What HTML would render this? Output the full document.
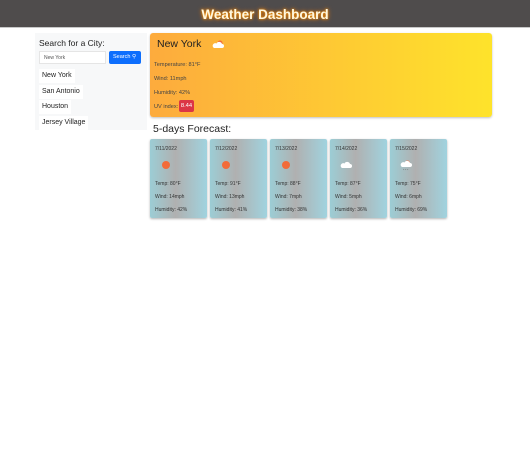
<!DOCTYPE html>
<html><head><style>
*{margin:0;padding:0;box-sizing:border-box}
body{width:530px;height:450px;background:#fff;font-family:"Liberation Sans","DejaVu Sans",sans-serif;color:#212529;position:relative;overflow:hidden}
.hdr{position:absolute;left:0;top:0;width:530px;height:28px;background:#4f4c4c;border-bottom:1px solid #c8c8c8}
.hdr h1{position:absolute;left:0;right:0;top:7px;text-align:center;font-size:13.5px;font-weight:bold;color:#fff8e0;text-shadow:0 0 2px #ff9a00,0 0 5px #ff7a00}
.side{position:absolute;left:35px;top:33px;width:112px;height:97px;background:#f7f8f9}
.side .t{position:absolute;left:4px;top:5px;font-size:8.5px;color:#222}
.inp{position:absolute;left:4px;top:18px;width:67px;height:13px;background:#fff;border:1px solid #e5e5e5;font-size:5px;color:#555;padding:3px 4px}
.btn{position:absolute;left:74px;top:18px;width:32px;height:13px;background:#0d6efd;border-radius:2px;color:#fff;font-size:5.5px;padding:3px 4px}
.city{position:absolute;left:4px;background:#fff;font-size:7px;color:#222;padding:3px 3px;height:14px}
.main{position:absolute;left:150px;top:33px;width:342px;height:84px;background:linear-gradient(90deg,#fdab3d,#fee32b);border-radius:3px;box-shadow:0 1px 2px rgba(0,0,0,.25)}
.main .n{position:absolute;left:7px;top:5px;font-size:10.5px;color:#222}
.main .l{position:absolute;left:4px;font-size:5.6px;color:#444}
.uv{position:absolute;left:29px;top:67px;width:15px;height:12px;background:#dc3545;border-radius:2px;color:#fff;font-size:5.8px;text-align:center;line-height:12px}
.fh{position:absolute;left:153px;top:123px;font-size:10.5px;color:#222}
.card{position:absolute;top:139px;width:57px;height:79px;border-radius:2px;background:linear-gradient(90deg,#9ccdd5,#b0b0b0 45%,#a0d3df);box-shadow:0 1px 2px rgba(0,0,0,.3);font-size:5px;color:#333}
.card div{position:absolute;left:5px}
.sun{width:8px;height:8px;border-radius:50%;background:#f26b3a;left:12px!important;top:22px}
</style></head><body>
<div class="hdr"><h1>Weather Dashboard</h1></div>
<div class="side">
<div class="t">Search for a City:</div>
<div class="inp">New York</div>
<div class="btn">Search &#9906;</div>
<div class="city" style="top:36px">New York</div>
<div class="city" style="top:52px">San Antonio</div>
<div class="city" style="top:67px">Houston</div>
<div class="city" style="top:83px">Jersey Village</div>
</div>
<div class="main">
<div class="n">New York</div>
<svg style="position:absolute;left:62px;top:7px" width="12" height="9" viewBox="0 0 12 9"><circle cx="8" cy="3" r="2.5" fill="#f26b3a"/><path d="M2 8h8a2 2 0 0 0 0-4a3 3 0 0 0-5.5-.5A2.2 2.2 0 0 0 2 8z" fill="#fff"/></svg>
<div class="l" style="top:29px">Temperature: 81°F</div>
<div class="l" style="top:43px">Wind: 11mph</div>
<div class="l" style="top:57px">Humidity: 42%</div>
<div class="l" style="top:71px">UV index:</div>
<div class="uv">8.44</div>
</div>
<div class="fh">5-days Forecast:</div>
<div class="card" style="left:150px"><div style="top:7px">7/11/2022</div><div class="sun"></div><div style="top:42px">Temp: 80°F</div><div style="top:55px">Wind: 14mph</div><div style="top:68px">Humidity: 42%</div></div>
<div class="card" style="left:210px"><div style="top:7px">7/12/2022</div><div class="sun"></div><div style="top:42px">Temp: 91°F</div><div style="top:55px">Wind: 13mph</div><div style="top:68px">Humidity: 41%</div></div>
<div class="card" style="left:270px"><div style="top:7px">7/13/2022</div><div class="sun"></div><div style="top:42px">Temp: 88°F</div><div style="top:55px">Wind: 7mph</div><div style="top:68px">Humidity: 38%</div></div>
<div class="card" style="left:330px"><div style="top:7px">7/14/2022</div><svg style="position:absolute;left:10px;top:22px" width="12" height="8" viewBox="0 0 12 8"><path d="M2 7h8a2 2 0 0 0 0-4a3 3 0 0 0-5.5-.5A2.2 2.2 0 0 0 2 7z" fill="#fff"/></svg><div style="top:42px">Temp: 87°F</div><div style="top:55px">Wind: 5mph</div><div style="top:68px">Humidity: 36%</div></div>
<div class="card" style="left:390px"><div style="top:7px">7/15/2022</div><svg style="position:absolute;left:10px;top:21px" width="12" height="11" viewBox="0 0 12 11"><circle cx="7.5" cy="3" r="2.5" fill="#f26b3a"/><path d="M2 7h8a2 2 0 0 0 0-4a3 3 0 0 0-5.5-.5A2.2 2.2 0 0 0 2 7z" fill="#fff"/><path d="M4 9l-.5 1M6 9l-.5 1M8 9l-.5 1" stroke="#777" stroke-width=".6"/></svg><div style="top:42px">Temp: 75°F</div><div style="top:55px">Wind: 6mph</div><div style="top:68px">Humidity: 69%</div></div>
</body></html>
